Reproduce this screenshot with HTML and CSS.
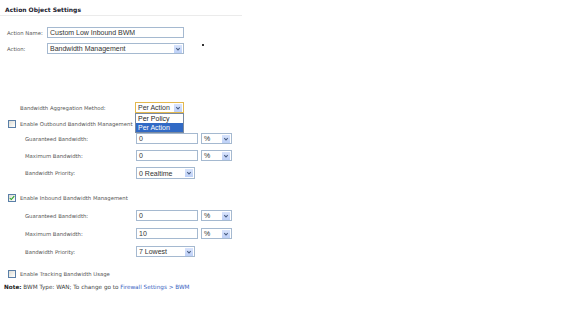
FILE: index.html
```html
<!DOCTYPE html>
<html>
<head>
<meta charset="utf-8">
<link rel="stylesheet" href="styles.css">
</head>
<body>
<div class="page">
  <div class="title">Action Object Settings</div>

  <div class="row row-name">
    <span class="lbl lbl-top">Action Name:</span>
    <div class="field w-name">Custom Low Inbound BWM</div>
  </div>
  <div class="row row-action">
    <span class="lbl lbl-top">Action:</span>
    <div class="select w-name"><span class="val">Bandwidth Management</span><span class="arrow"><svg viewBox="0 0 9 9" width="9" height="9"><path d="M2.5 3.5 L4.5 5.5 L6.5 3.5" fill="none" stroke="#4d6185" stroke-width="1.2"/></svg></span></div>
    <span class="dot"></span>
  </div>

  <div class="row row-agg">
    <span class="lbl lbl-agg">Bandwidth Aggregation Method:</span>
    <div class="select w-agg focus"><span class="val">Per Action</span><span class="arrow"><svg viewBox="0 0 9 9" width="9" height="9"><path d="M2.5 3.5 L4.5 5.5 L6.5 3.5" fill="none" stroke="#4d6185" stroke-width="1.2"/></svg></span>
      <div class="list">
        <div class="opt">Per Policy</div>
        <div class="opt sel">Per Action</div>
      </div>
    </div>
  </div>

  <div class="row chkrow row-out">
    <span class="chk"></span>
    <span class="lbl">Enable Outbound Bandwidth Management</span>
  </div>
  <div class="row row-g1">
    <span class="lbl lbl-sub">Guaranteed Bandwidth:</span>
    <div class="field w-num">0</div>
    <div class="select w-unit"><span class="val">%</span><span class="arrow"><svg viewBox="0 0 9 9" width="9" height="9"><path d="M2.5 3.5 L4.5 5.5 L6.5 3.5" fill="none" stroke="#4d6185" stroke-width="1.2"/></svg></span></div>
  </div>
  <div class="row row-m1">
    <span class="lbl lbl-sub">Maximum Bandwidth:</span>
    <div class="field w-num">0</div>
    <div class="select w-unit"><span class="val">%</span><span class="arrow"><svg viewBox="0 0 9 9" width="9" height="9"><path d="M2.5 3.5 L4.5 5.5 L6.5 3.5" fill="none" stroke="#4d6185" stroke-width="1.2"/></svg></span></div>
  </div>
  <div class="row row-p1">
    <span class="lbl lbl-sub">Bandwidth Priority:</span>
    <div class="select w-prio"><span class="val">0 Realtime</span><span class="arrow"><svg viewBox="0 0 9 9" width="9" height="9"><path d="M2.5 3.5 L4.5 5.5 L6.5 3.5" fill="none" stroke="#4d6185" stroke-width="1.2"/></svg></span></div>
  </div>

  <div class="row chkrow row-in">
    <span class="chk checked"><svg viewBox="0 0 8 8" width="6" height="6"><path d="M1 4 L3 6 L7 1.5" fill="none" stroke="#21a121" stroke-width="1.4"/></svg></span>
    <span class="lbl">Enable Inbound Bandwidth Management</span>
  </div>
  <div class="row row-g2">
    <span class="lbl lbl-sub">Guaranteed Bandwidth:</span>
    <div class="field w-num">0</div>
    <div class="select w-unit"><span class="val">%</span><span class="arrow"><svg viewBox="0 0 9 9" width="9" height="9"><path d="M2.5 3.5 L4.5 5.5 L6.5 3.5" fill="none" stroke="#4d6185" stroke-width="1.2"/></svg></span></div>
  </div>
  <div class="row row-m2">
    <span class="lbl lbl-sub">Maximum Bandwidth:</span>
    <div class="field w-num">10</div>
    <div class="select w-unit"><span class="val">%</span><span class="arrow"><svg viewBox="0 0 9 9" width="9" height="9"><path d="M2.5 3.5 L4.5 5.5 L6.5 3.5" fill="none" stroke="#4d6185" stroke-width="1.2"/></svg></span></div>
  </div>
  <div class="row row-p2">
    <span class="lbl lbl-sub">Bandwidth Priority:</span>
    <div class="select w-prio"><span class="val">7 Lowest</span><span class="arrow"><svg viewBox="0 0 9 9" width="9" height="9"><path d="M2.5 3.5 L4.5 5.5 L6.5 3.5" fill="none" stroke="#4d6185" stroke-width="1.2"/></svg></span></div>
  </div>

  <div class="row chkrow row-track">
    <span class="chk"></span>
    <span class="lbl">Enable Tracking Bandwidth Usage</span>
  </div>

  <div class="note"><b>Note:</b> BWM Type: WAN; To change go to <span class="link">Firewall Settings &gt; BWM</span></div>
</div>
</body>
</html>
```

FILE: styles.css
```css
html, body {
  margin: 0;
  padding: 0;
  background: #ffffff;
}
.page {
  width: 576px;
  height: 312px;
  font-family: "DejaVu Sans", Verdana, sans-serif;
  color: #444444;
}
.title {
  width: 237px;
  height: 11px;
  padding-left: 5px;
  padding-top: 4px;
  border-bottom: 1px solid #ebebeb;
  font-weight: bold;
  font-size: 6px;
  color: #1b1b2e;
  display: flex;
  align-items: center;
  box-sizing: content-box;
}
.row {
  display: flex;
  align-items: center;
  height: 11px;
}
.lbl {
  font-size: 5.3px;
  white-space: nowrap;
  color: #555555;
}
.lbl-top {
  width: 40px;
  padding-left: 7px;
}
.lbl-agg {
  width: 115px;
  padding-left: 20px;
}
.lbl-sub {
  width: 111px;
  padding-left: 25px;
}
.row-name { margin-top: 11px; }
.row-action { margin-top: 5px; }
.row-agg { margin-top: 48px; }
.row-out { margin-top: 7px; }
.row-g1 { margin-top: 5px; }
.row-m1 { margin-top: 6px; }
.row-p1 { margin-top: 6px; height: 12px; }
.row-in { margin-top: 15px; }
.row-g2 { margin-top: 8px; }
.row-m2 { margin-top: 7px; }
.row-p2 { margin-top: 7px; }
.row-track { margin-top: 13px; }

.chkrow {
  height: 8px;
  padding-left: 8px;
}
.chk {
  width: 8px;
  height: 8px;
  box-sizing: border-box;
  border: 1px solid #5a7fa8;
  background: linear-gradient(135deg, #dcdcd5 0%, #f4f4f0 70%, #ffffff 100%);
  margin-right: 4px;
  display: flex;
  align-items: center;
  justify-content: center;
}
.field, .select {
  box-sizing: border-box;
  height: 11px;
  border: 1px solid #a5b9d0;
  background: #ffffff;
  font-family: "Liberation Sans", Arial, sans-serif;
  font-size: 7px;
  color: #333333;
  display: flex;
  align-items: center;
  padding-left: 2px;
}
.select {
  position: relative;
  justify-content: space-between;
  padding-right: 1px;
}
.select.focus {
  border-color: #e3b84e;
}
.arrow {
  width: 8px;
  height: 8px;
  background: linear-gradient(#d9e4fc, #bdd0f7);
  display: flex;
  align-items: center;
  justify-content: center;
}
.arrow svg {
  width: 8px;
  height: 8px;
}
.w-name { width: 137px; }
.w-agg { width: 49px; }
.w-num { width: 62px; }
.w-unit { width: 31px; margin-left: 3px; }
.w-prio { width: 59px; height: 12px; }
.row-p2 .w-prio { height: 11px; }
.dot {
  width: 2px;
  height: 2px;
  background: #333333;
  margin-left: 18px;
  align-self: flex-start;
  margin-top: 1px;
}
.list {
  position: absolute;
  left: -1px;
  top: 10px;
  width: 49px;
  box-sizing: border-box;
  border: 1px solid #7a8aa0;
  background: #ffffff;
}
.opt {
  height: 9px;
  line-height: 9px;
  padding-left: 2px;
  font-size: 7px;
  color: #222222;
}
.opt.sel {
  background: #316ac5;
  color: #ffffff;
}
.note {
  margin-top: 5px;
  height: 8px;
  line-height: 8px;
  padding-left: 4px;
  font-size: 5.7px;
  color: #444444;
  white-space: nowrap;
}
.note b {
  color: #222222;
}
.link {
  color: #3a5fbf;
}
```
